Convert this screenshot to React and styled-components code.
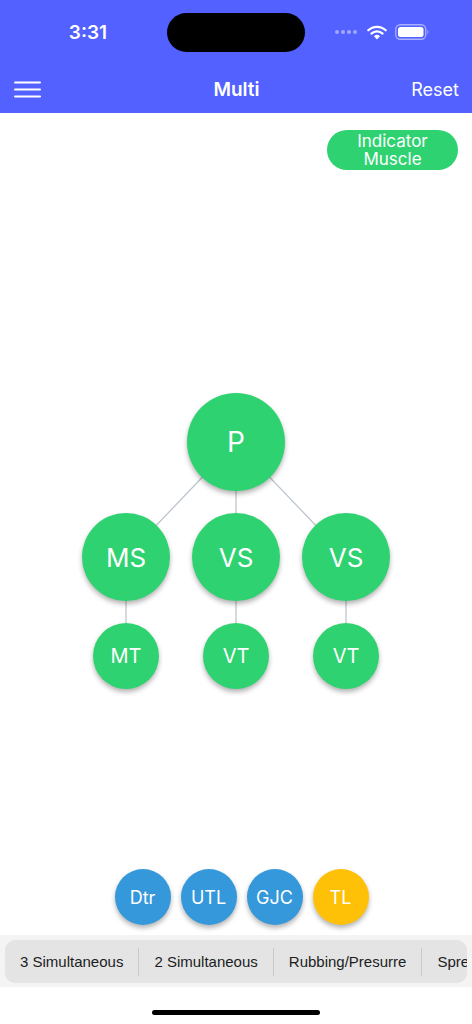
import React from 'react';
import styled, { createGlobalStyle } from 'styled-components';

const GlobalStyle = createGlobalStyle`
  html, body {
    margin: 0;
    padding: 0;
    background: #ffffff;
    font-family: Inter, "Liberation Sans", sans-serif;
  }
  * { box-sizing: border-box; }
`;

const Page = styled.div`
  width: 472px;
  height: 1024px;
  display: flex;
  flex-direction: column;
  background: #ffffff;
  overflow: hidden;
`;

const Header = styled.header`
  background: #5261ff;
  height: 113px;
  display: flex;
  flex-direction: column;
  color: #ffffff;
`;

const StatusBar = styled.div`
  height: 64px;
  display: grid;
  grid-template-columns: 1fr 138px 1fr;
  align-items: center;
`;

const Time = styled.div`
  font-size: 19px;
  font-weight: 600;
  text-align: center;
  padding-left: 9px;
  margin-top: 1px;
`;

const Island = styled.div`
  height: 39px;
  border-radius: 20px;
  background: #000000;
`;

const StatusIcons = styled.div`
  display: flex;
  align-items: center;
  gap: 8px;
  padding-left: 30px;
`;

const NavBar = styled.div`
  flex: 1;
  display: grid;
  grid-template-columns: 1fr auto 1fr;
  align-items: center;
  padding: 1px 13px 0 14px;
`;

const Title = styled.div`
  font-size: 19px;
  font-weight: 600;
`;

const ResetButton = styled.div`
  justify-self: end;
  font-size: 18px;
  font-weight: 400;
`;

const Main = styled.main`
  flex: 1;
  display: flex;
  flex-direction: column;
`;

const IndicatorRow = styled.div`
  display: flex;
  justify-content: flex-end;
  padding: 17px 14px 0 0;
`;

const IndicatorButton = styled.div`
  width: 131px;
  height: 40px;
  border-radius: 20px;
  background: #2ed271;
  color: #ffffff;
  font-size: 17px;
  line-height: 18px;
  text-align: center;
  display: flex;
  align-items: center;
  justify-content: center;
`;

const TreeCanvas = styled.div`
  position: relative;
  width: 472px;
  height: 300px;
  margin-top: 223px;
`;

const Links = styled.svg`
  position: absolute;
  left: 0;
  top: 0;
`;

const Node = styled.div`
  position: absolute;
  border-radius: 50%;
  background: #2ed271;
  color: #ffffff;
  display: flex;
  align-items: center;
  justify-content: center;
  box-shadow: 0 3px 5px rgba(0, 0, 0, 0.3);
  font-size: ${(p) => p.$font}px;
`;

const ActionRow = styled.div`
  display: flex;
  justify-content: center;
  gap: 10px;
  padding-left: 11px;
  margin-bottom: 10px;
`;

const ActionButton = styled.div`
  width: 56px;
  height: 56px;
  border-radius: 50%;
  background: ${(p) => (p.$active ? '#ffc107' : '#3498db')};
  color: #ffffff;
  font-size: 18px;
  display: flex;
  align-items: center;
  justify-content: center;
  box-shadow: 0 3px 5px rgba(0, 0, 0, 0.3);
`;

const SegmentWrap = styled.div`
  background: #f4f4f4;
  padding: 5px 5px 4px 5px;
`;

const Segments = styled.div`
  height: 43px;
  border-radius: 10px;
  background: #e4e4e4;
  display: flex;
  align-items: center;
  overflow: hidden;
  white-space: nowrap;
`;

const Segment = styled.div`
  flex-shrink: 0;
  padding: 0 15px;
  font-family: "Liberation Sans", Arial, sans-serif;
  font-size: 15px;
  color: #1c1c1e;
  border-left: ${(p) => (p.$first ? 'none' : '1px solid #c9c9c9')};
  height: 28px;
  display: flex;
  align-items: center;
`;

const HomeArea = styled.div`
  height: 37px;
  display: flex;
  justify-content: center;
  padding-top: 23px;
`;

const HomeBar = styled.div`
  width: 168px;
  height: 5px;
  border-radius: 3px;
  background: #000000;
`;

const Hamburger = () => (
  <svg width="27" height="17" viewBox="0 0 27 17">
    <g stroke="#fff" strokeWidth="2" strokeLinecap="round">
      <line x1="1" y1="1.5" x2="26" y2="1.5" />
      <line x1="1" y1="8.5" x2="26" y2="8.5" />
      <line x1="1" y1="15.5" x2="26" y2="15.5" />
    </g>
  </svg>
);

const StatusGlyphs = () => (
  <StatusIcons>
    <svg width="24" height="6" viewBox="0 0 24 6">
      {[2, 8, 14, 20].map((x) => (
        <circle key={x} cx={x} cy="3" r="2" fill="rgba(255,255,255,0.45)" />
      ))}
    </svg>
    <svg width="20" height="15" viewBox="0 0 20 15">
      <path d="M10 14.5 L7 11.2 A4.5 4.5 0 0 1 13 11.2 Z" fill="#fff" />
      <path d="M4.4 8.6 A8 8 0 0 1 15.6 8.6" stroke="#fff" strokeWidth="2.2" fill="none" strokeLinecap="round" />
      <path d="M1.3 5.3 A12.5 12.5 0 0 1 18.7 5.3" stroke="#fff" strokeWidth="2.2" fill="none" strokeLinecap="round" />
    </svg>
    <svg width="35" height="16" viewBox="0 0 35 16">
      <rect x="0.75" y="0.75" width="30" height="14.5" rx="4.5" stroke="rgba(255,255,255,0.5)" strokeWidth="1.3" fill="none" />
      <rect x="3" y="3" width="25.5" height="10" rx="2.5" fill="#fff" />
      <path d="M32.5 5.5 Q34.5 8 32.5 10.5 Z" fill="rgba(255,255,255,0.5)" />
    </svg>
  </StatusIcons>
);

const nodes = [
  { id: 'p', label: 'P', x: 236, y: 49, r: 49, font: 28 },
  { id: 'ms', label: 'MS', x: 126, y: 164, r: 44, font: 26 },
  { id: 'vs1', label: 'VS', x: 236, y: 164, r: 44, font: 26 },
  { id: 'vs2', label: 'VS', x: 346, y: 164, r: 44, font: 26 },
  { id: 'mt', label: 'MT', x: 126, y: 263, r: 33, font: 20 },
  { id: 'vt1', label: 'VT', x: 236, y: 263, r: 33, font: 20 },
  { id: 'vt2', label: 'VT', x: 346, y: 263, r: 33, font: 20 },
];

const links = [
  ['p', 'ms'],
  ['p', 'vs1'],
  ['p', 'vs2'],
  ['ms', 'mt'],
  ['vs1', 'vt1'],
  ['vs2', 'vt2'],
];

const byId = Object.fromEntries(nodes.map((n) => [n.id, n]));

const Tree = () => (
  <TreeCanvas>
    <Links width="472" height="300">
      {links.map(([a, b]) => (
        <line
          key={a + b}
          x1={byId[a].x}
          y1={byId[a].y}
          x2={byId[b].x}
          y2={byId[b].y}
          stroke="#b9c2ca"
          strokeWidth="1.2"
        />
      ))}
    </Links>
    {nodes.map((n) => (
      <Node
        key={n.id}
        $font={n.font}
        style={{ left: n.x - n.r, top: n.y - n.r, width: n.r * 2, height: n.r * 2 }}
      >
        {n.label}
      </Node>
    ))}
  </TreeCanvas>
);

const actions = ['Dtr', 'UTL', 'GJC', 'TL'];
const modes = ['3 Simultaneous', '2 Simultaneous', 'Rubbing/Presurre', 'Spreading'];

export default function App() {
  return (
    <>
      <GlobalStyle />
      <Page>
        <Header>
          <StatusBar>
            <Time>3:31</Time>
            <Island />
            <StatusGlyphs />
          </StatusBar>
          <NavBar>
            <Hamburger />
            <Title>Multi</Title>
            <ResetButton>Reset</ResetButton>
          </NavBar>
        </Header>
        <Main>
          <IndicatorRow>
            <IndicatorButton>
              Indicator
              <br />
              Muscle
            </IndicatorButton>
          </IndicatorRow>
          <Tree />
        </Main>
        <ActionRow>
          {actions.map((a) => (
            <ActionButton key={a} $active={a === 'TL'}>
              {a}
            </ActionButton>
          ))}
        </ActionRow>
        <SegmentWrap>
          <Segments>
            {modes.map((m, i) => (
              <Segment key={m} $first={i === 0}>
                {m}
              </Segment>
            ))}
          </Segments>
        </SegmentWrap>
        <HomeArea>
          <HomeBar />
        </HomeArea>
      </Page>
    </>
  );
}
